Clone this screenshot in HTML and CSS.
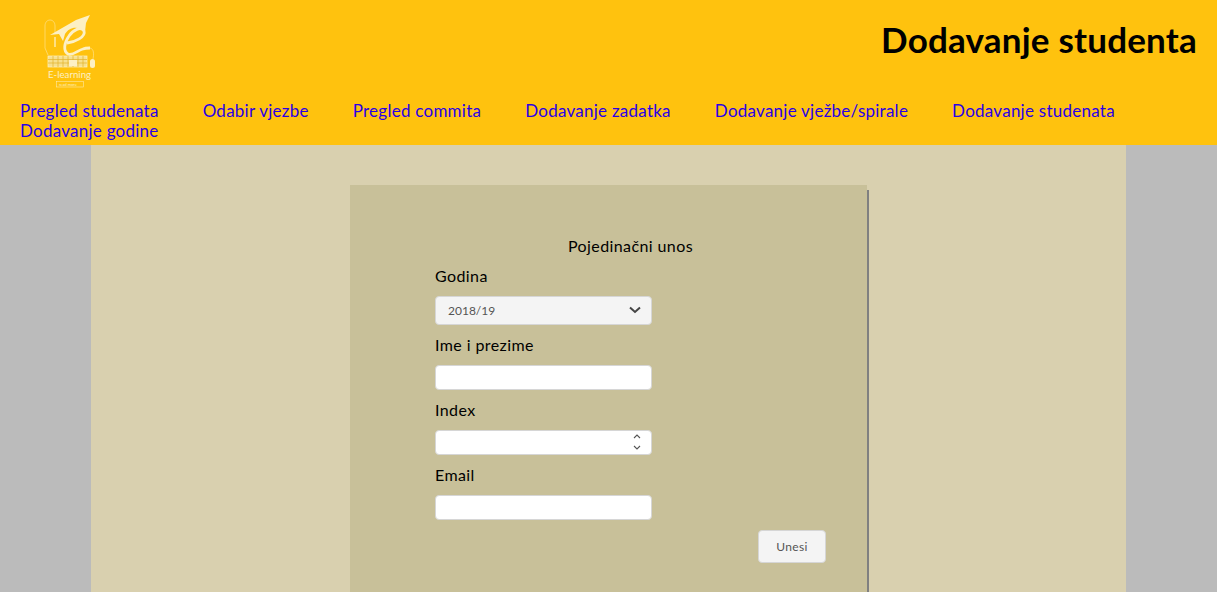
FILE: index.html
```html
<!DOCTYPE html>
<html lang="en">
<head>
    <meta charset="UTF-8">
    <meta name="viewport" content="width=device-width, initial-scale=1.0">
    <title>Dodavanje studenta</title>
    <link rel="stylesheet" href="styles.css">
</head>
<body>

    <header class="top">
        <div class="top-row">
            <svg class="logo" width="65" height="85" viewBox="0 0 65 85" fill="none" stroke="#fdf0c4">
                <!-- cap -->
                <path d="M10 25 L36 10 L50 5 L46 13 L45 22 C38 15 29 17 25 24 L23 31 L19 24 Z" fill="#fdf0c4" stroke="none"/>
                <!-- script e -->
                <path d="M27 33 C35 32 46 27 44 21 C41 16 33 20 29 26 C24 33 23 41 28 44 C33 46 38 40 43 39 C45 38 47 38 50 38" stroke-width="2.800"/>
                <!-- cords -->
                <path d="M50 38 C54 39 54 44 53 49" stroke-width="0.600" stroke-opacity="0.800"/>
                <path d="M8 45 L5 38 V16 C5 8 15 8 15 16 V24" stroke-width="0.600" stroke-opacity="0.800"/>
                <path d="M15 27 V37" stroke-width="1.300"/>
                <!-- keyboard -->
                <rect x="8" y="46" width="39" height="11" fill="#f7e08e" stroke-width="0.700"/>
                <path d="M8 49.500 H47 M8 53 H47 M13 46 V57 M18 46 V57 M23 46 V57 M28 46 V57 M33 46 V57 M38 46 V57 M43 46 V57" stroke="#e3b22c" stroke-width="0.700"/>
                <rect x="29" y="50" width="8" height="6" fill="#fdf0c4" stroke="none"/>
                <!-- mouse -->
                <rect x="50" y="49" width="5" height="9" rx="2.500" fill="#fdf0c4" stroke="none"/>
                <text class="logo-name" x="8" y="68">E-learning</text>
                <rect x="16.500" y="71.500" width="27" height="5.500" stroke-width="0.500"/>
                <text class="logo-more" x="19" y="75.700">read more</text>
            </svg>
            <h1 class="title">Dodavanje studenta</h1>
        </div>
        <nav class="menu">
            <a href="#">Pregled studenata</a>
            <a href="#">Odabir vjezbe</a>
            <a href="#">Pregled commita</a>
            <a href="#">Dodavanje zadatka</a>
            <a href="#">Dodavanje vježbe/spirale</a>
            <a href="#">Dodavanje studenata</a>
            <a href="#">Dodavanje godine</a>
        </nav>
    </header>

    <main class="content">
        <section class="panel">
            <form class="student-form">
                <p class="form-title">Pojedinačni unos</p>

                <label class="field-label" for="godina">Godina</label>
                <div class="select-wrap">
                    <select id="godina" class="field-select">
                        <option>2018/19</option>
                    </select>
                    <svg class="select-arrow" width="12" height="8" viewBox="0 0 12 8" fill="none" stroke="#444" stroke-width="2">
                        <path d="M1 1.500 L6 6 L11 1.500"/>
                    </svg>
                </div>

                <label class="field-label" for="ime">Ime i prezime</label>
                <input id="ime" class="field-input" type="text">

                <label class="field-label" for="index">Index</label>
                <div class="select-wrap">
                    <input id="index" class="field-input number-input" type="text">
                    <svg class="spin" width="8" height="18" viewBox="0 0 8 18" fill="none" stroke="#555" stroke-width="1.100">
                        <path d="M1 5 L4 2 L7 5"/>
                        <path d="M1 13 L4 16 L7 13"/>
                    </svg>
                </div>

                <label class="field-label" for="email">Email</label>
                <input id="email" class="field-input" type="text">

                <div class="form-actions">
                    <button type="button" class="submit-btn">Unesi</button>
                </div>
            </form>
        </section>
    </main>

</body>
</html>
```

FILE: styles.css
```css
html, body {
    height: 100%;
}
body {
    margin: 0;
    font-family: Lato, "Open Sans", sans-serif;
    background: #bbbbbb;
    color: #000;
    overflow: hidden;
}
.top {
    background: #ffc20e;
    height: 145px;
    box-sizing: border-box;
    padding: 10px 20px 0;
}
.top-row {
    display: flex;
    justify-content: space-between;
    align-items: flex-start;
    height: 91px;
}
.logo {
    margin-left: 20px;
}
.logo-name {
    font-size: 9.700px;
    fill: #fdf0c4;
    stroke: none;
}
.logo-more {
    font-size: 4px;
    fill: #fdf0c4;
    stroke: none;
}
.title {
    margin: 8px 0 0;
    font-size: 35px;
    line-height: 42px;
    font-weight: 700;
    letter-spacing: 0.2px;
}
.menu {
    display: flex;
    flex-wrap: wrap;
    column-gap: 44px;
    line-height: 20px;
}
.menu a {
    color: #2a00e6;
    text-decoration: none;
    font-size: 17px;
    letter-spacing: 0.25px;
}
.content {
    width: 1035px;
    height: 447px;
    margin-left: 91px;
    background: #d9d0af;
    padding-top: 40px;
    box-sizing: border-box;
    overflow: hidden;
}
.panel {
    width: 517px;
    height: 420px;
    margin-left: 259px;
    background: #c8c099;
    box-shadow: 2px 5px 0 #808080;
    box-sizing: border-box;
    padding: 51px 41px 0 85px;
}
.form-title {
    margin: 0 0 10px;
    padding-left: 133px;
    font-size: 16px;
    line-height: 20px;
    letter-spacing: 0.4px;
}
.field-label {
    display: block;
    font-size: 16px;
    line-height: 20px;
    letter-spacing: 0.4px;
    margin-bottom: 10px;
}
.select-wrap {
    position: relative;
    width: 217px;
}
.field-select {
    appearance: none;
    display: block;
    width: 217px;
    height: 29px;
    margin-bottom: 10px;
    padding: 0 12px;
    background: #f4f4f4;
    border: 1px solid #d6d6d6;
    border-radius: 4px;
    font-family: inherit;
    font-size: 12px;
    color: #555;
}
.select-arrow {
    position: absolute;
    top: 10px;
    right: 11px;
}
.spin {
    position: absolute;
    top: 3px;
    right: 11px;
}
.field-input {
    display: block;
    width: 217px;
    height: 25px;
    box-sizing: border-box;
    margin-bottom: 10px;
    background: #fff;
    border: 1px solid #d6d6d6;
    border-radius: 4px;
}
.form-actions {
    display: flex;
    justify-content: flex-end;
}
.submit-btn {
    width: 68px;
    height: 33px;
    background: #f4f4f4;
    border: 1px solid #d6d6d6;
    border-radius: 4px;
    font-family: inherit;
    font-size: 12px;
    letter-spacing: 0.3px;
    color: #555;
}
```
